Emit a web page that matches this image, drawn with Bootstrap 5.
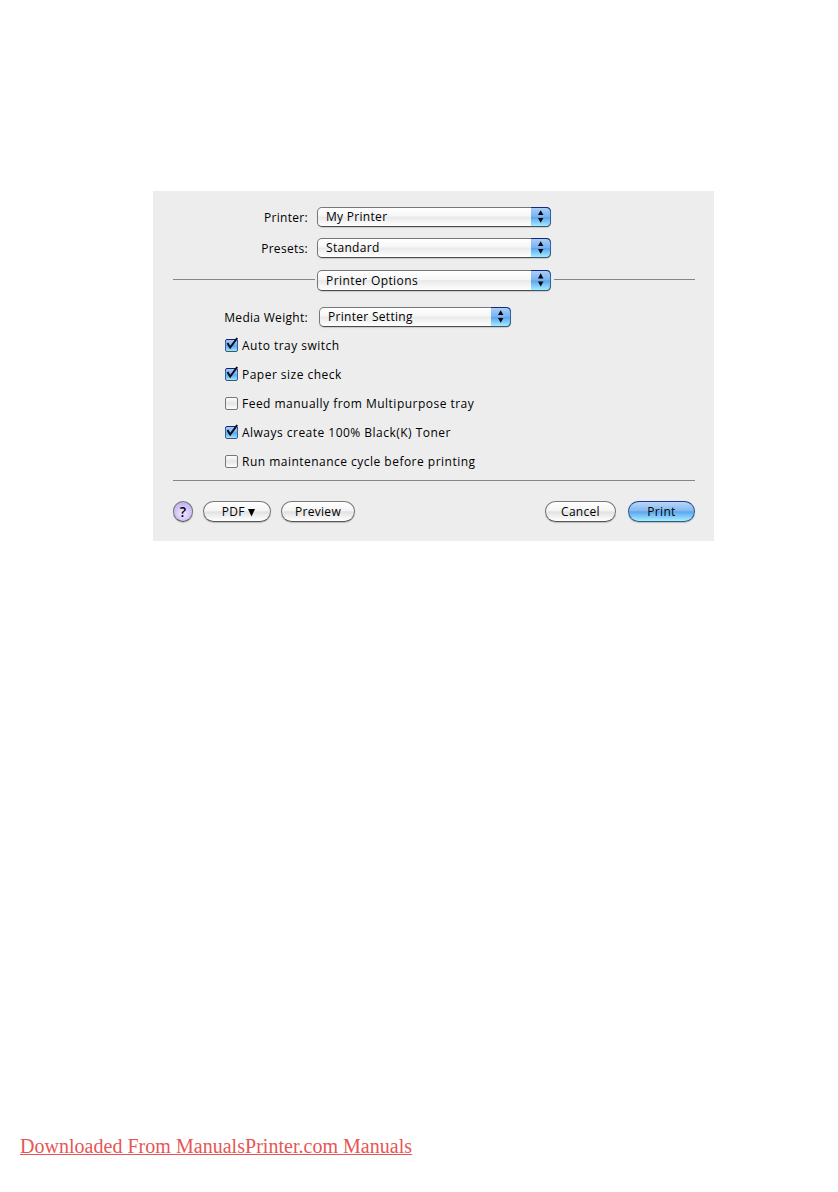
<!DOCTYPE html>
<html lang="en">
<head>
  <meta charset="UTF-8" />
  <meta name="viewport" content="width=device-width, initial-scale=1.0" />
  <title>Print</title>
  <link href="https://cdn.jsdelivr.net/npm/bootstrap@5.3.3/dist/css/bootstrap.min.css" rel="stylesheet" />
  <style>
    body {
      min-height: 1192px;
      font-family: "Open Sans", "Noto Sans", sans-serif;
      font-size: 12px;
      line-height: 16px;
      letter-spacing: 0.3px;
      color: #000;
      background: #fff;
    }

    .print-dialog {
      width: 561px;
      height: 350px;
      margin: 191px 0 0 153px;
      padding: 16px 19px 0 20px;
      background: #ededed;
    }

    .field-label {
      width: 135px;
      margin-right: 9px;
      padding-top: 2px;
      text-align: right;
    }

    .popup {
      width: 234px;
      height: 20px;
      padding: 0 0 0 8px;
      font: inherit;
      letter-spacing: inherit;
      color: inherit;
      border: 1px solid #777;
      border-bottom-color: #4c4c4c;
      border-radius: 5px;
      background: linear-gradient(#fff 0, #f6f6f6 45%, #e9e9e9 50%, #fff 100%);
      box-shadow: 0 1px 1px rgba(0, 0, 0, 0.15);
      position: relative;
    }

    .popup-arrows {
      position: absolute;
      top: -1px;
      right: -1px;
      width: 20px;
      height: 20px;
    }

    .popup-media {
      width: 192px;
      margin-left: 11px;
    }

    .popup-section,
    .popup-section .popup-arrows {
      height: 21px;
    }

    .popup-section { letter-spacing: 0.42px; }

    .row-presets { margin-top: 11px; }
    .row-section { margin-top: 12px; }
    .row-media { margin-top: 16px; }

    .rule {
      height: 1px;
      background: #858585;
    }

    .rule-left { width: 142px; margin: 0 2px 2px 0; }
    .rule-right { margin: 0 0 2px 3px; }

    .option-list {
      margin: 4px 0 0 51px;
      letter-spacing: 0.48px;
    }

    .option {
      height: 29px;
    }

    .option svg {
      margin: 0 3px 2px 0;
      overflow: visible;
    }

    .aqua-btn {
      height: 21px;
      padding: 1px 0 0;
      font: inherit;
      letter-spacing: inherit;
      color: #000;
      border: 1px solid #777;
      border-bottom-color: #555;
      border-radius: 11px;
      background: linear-gradient(#fff 0, #f5f5f5 45%, #e2e2e2 52%, #fff 100%);
      box-shadow: 0 1px 1px rgba(0, 0, 0, 0.2);
    }

    .aqua-help {
      width: 20px;
      padding: 0;
      font-size: 14px;
      font-weight: 600;
      letter-spacing: 0;
      background: radial-gradient(circle at 50% 60%, #e5dcff 20%, #c3b2ef 75%);
    }

    .aqua-pdf { width: 68px; margin-left: 10px; padding-left: 3px; }
    .aqua-preview { width: 74px; margin-left: 10px; }
    .aqua-cancel { width: 71px; margin-right: 12px; }

    .aqua-print {
      width: 67px;
      border-color: #22379a #315b9c #35587d;
      background: linear-gradient(#b9d7f7 0, #86b9f0 45%, #5ea5ee 52%, #a5f0ff 100%);
    }

    .buttons { margin-top: 20px; }

    .source-link {
      display: inline-block;
      margin: 593px 0 0 20px;
      font-family: "Liberation Serif", serif;
      font-size: 20px;
      line-height: 24px;
      letter-spacing: 0.025px;
      color: #e85555;
      text-decoration-thickness: 1px;
      text-underline-offset: 1px;
      white-space: nowrap;
    }
  </style>
</head>
<body>
  <svg width="0" height="0" class="position-absolute">
    <defs>
      <linearGradient id="blue" x2="0" y2="1">
        <stop offset="0" stop-color="#a9cdf5" />
        <stop offset=".48" stop-color="#79b2ef" />
        <stop offset=".52" stop-color="#5aa4f0" />
        <stop offset="1" stop-color="#a2edff" />
      </linearGradient>
      <linearGradient id="edge" x2="0" y2="1">
        <stop offset="0" stop-color="#14207c" />
        <stop offset=".3" stop-color="#3169b4" />
        <stop offset="1" stop-color="#3c576e" />
      </linearGradient>
      <linearGradient id="grey" x2="0" y2="1">
        <stop offset="0" stop-color="#fff" />
        <stop offset=".5" stop-color="#e6e6e6" />
        <stop offset="1" stop-color="#fff" />
      </linearGradient>
      <symbol id="arrows" viewBox="0 0 20 20" preserveAspectRatio="none">
        <path d="M0 0H15Q20 0 20 5V15Q20 20 15 20H0Z" fill="url(#edge)" />
        <path d="M0 1H15Q19 1 19 5V15Q19 19 15 19H0Z" fill="url(#blue)" />
        <path d="M7 8L9.7 3.2L12.4 8ZM7 11H12.4L9.7 15.8Z" fill="#000" />
      </symbol>
      <symbol id="box-on" viewBox="0 0 15 16" overflow="visible">
        <rect x="1.5" y="2.5" width="12" height="12" rx="1.5" fill="url(#blue)" stroke="url(#edge)" />
        <path d="M3.4 6L6.2 10.5L13.2 1" fill="none" stroke="#0b0b18" stroke-width="2" />
      </symbol>
      <symbol id="box-off" viewBox="0 0 15 16">
        <rect x="1.5" y="2.5" width="12" height="12" rx="1.5" fill="url(#grey)" stroke="#777" />
      </symbol>
    </defs>
  </svg>

  <main class="print-dialog">
    <div class="d-flex align-items-center">
      <label class="field-label">Printer:</label>
      <button type="button" class="popup text-start">My Printer<svg class="popup-arrows"><use href="#arrows" /></svg></button>
    </div>
    <div class="d-flex align-items-center row-presets">
      <label class="field-label">Presets:</label>
      <button type="button" class="popup text-start">Standard<svg class="popup-arrows"><use href="#arrows" /></svg></button>
    </div>
    <div class="d-flex align-items-center row-section">
      <div class="rule rule-left"></div>
      <button type="button" class="popup popup-section text-start">Printer Options<svg class="popup-arrows"><use href="#arrows" /></svg></button>
      <div class="rule rule-right flex-grow-1"></div>
    </div>
    <div class="d-flex align-items-center row-media">
      <label class="field-label me-0">Media Weight:</label>
      <button type="button" class="popup popup-media text-start">Printer Setting<svg class="popup-arrows"><use href="#arrows" /></svg></button>
    </div>

    <div class="option-list">
      <label class="option d-flex align-items-center"><svg width="15" height="16"><use href="#box-on" /></svg><span>Auto tray switch</span></label>
      <label class="option d-flex align-items-center"><svg width="15" height="16"><use href="#box-on" /></svg><span>Paper size check</span></label>
      <label class="option d-flex align-items-center"><svg width="15" height="16"><use href="#box-off" /></svg><span>Feed manually from Multipurpose tray</span></label>
      <label class="option d-flex align-items-center"><svg width="15" height="16"><use href="#box-on" /></svg><span>Always create 100% Black(K) Toner</span></label>
      <label class="option d-flex align-items-center"><svg width="15" height="16"><use href="#box-off" /></svg><span>Run maintenance cycle before printing</span></label>
    </div>
    <div class="rule mt-1"></div>

    <div class="buttons d-flex align-items-center">
      <button type="button" class="aqua-btn aqua-help">?</button>
      <button type="button" class="aqua-btn aqua-pdf">PDF <svg width="7" height="8"><path d="M0 0H7L3.5 7.5Z" fill="#000" /></svg></button>
      <button type="button" class="aqua-btn aqua-preview">Preview</button>
      <button type="button" class="aqua-btn aqua-cancel ms-auto">Cancel</button>
      <button type="button" class="aqua-btn aqua-print">Print</button>
    </div>
  </main>

  <a href="#" class="source-link">Downloaded From ManualsPrinter.com Manuals</a>

  <script src="https://cdn.jsdelivr.net/npm/bootstrap@5.3.3/dist/js/bootstrap.bundle.min.js"></script>
</body>
</html>
